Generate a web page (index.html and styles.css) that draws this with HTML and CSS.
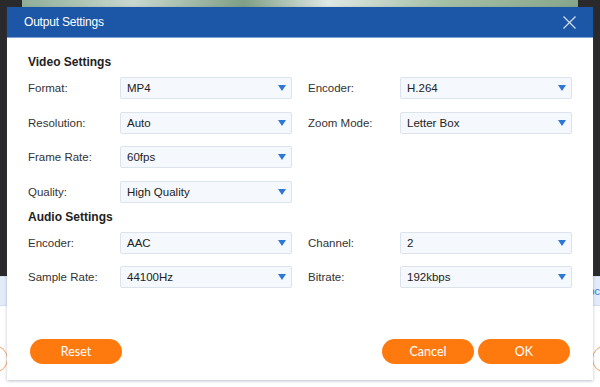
FILE: index.html
```html
<!DOCTYPE html>
<html>
<head>
<meta charset="utf-8">
<link rel="stylesheet" href="styles.css">
</head>
<body>
<div class="app">
  <div class="app-top">
    <div class="photo"></div>
  </div>
  <div class="app-band"><span class="band-text">oc</span></div>
  <div class="app-bottom">
    <span class="ring ring-left"></span>
    <span class="ring ring-right"></span>
  </div>
</div>

<div class="dialog">
  <div class="dialog-header">
    <span class="dialog-title">Output Settings</span>
    <svg class="close" width="13" height="13" viewBox="0 0 13 13"><path d="M0.5 0.5 L12.5 12.5 M12.5 0.5 L0.5 12.5" stroke="#cfdcef" stroke-width="1.3" fill="none"/></svg>
  </div>
  <div class="dialog-body">
    <div class="section-title">Video Settings</div>
    <div class="grid">
      <div class="label">Format:</div>
      <div class="select"><span>MP4</span><i class="arrow"></i></div>
      <div class="label">Encoder:</div>
      <div class="select"><span>H.264</span><i class="arrow"></i></div>

      <div class="label">Resolution:</div>
      <div class="select"><span>Auto</span><i class="arrow"></i></div>
      <div class="label">Zoom Mode:</div>
      <div class="select"><span>Letter Box</span><i class="arrow"></i></div>

      <div class="label">Frame Rate:</div>
      <div class="select"><span>60fps</span><i class="arrow"></i></div>
      <div class="empty"></div>
      <div class="empty"></div>

      <div class="label">Quality:</div>
      <div class="select"><span>High Quality</span><i class="arrow"></i></div>
      <div class="empty"></div>
      <div class="empty"></div>
    </div>

    <div class="section-title audio">Audio Settings</div>
    <div class="grid">
      <div class="label">Encoder:</div>
      <div class="select"><span>AAC</span><i class="arrow"></i></div>
      <div class="label">Channel:</div>
      <div class="select"><span>2</span><i class="arrow"></i></div>

      <div class="label">Sample Rate:</div>
      <div class="select"><span>44100Hz</span><i class="arrow"></i></div>
      <div class="label">Bitrate:</div>
      <div class="select"><span>192kbps</span><i class="arrow"></i></div>
    </div>
  </div>
  <div class="dialog-footer">
    <button class="btn">Reset</button>
    <div class="footer-right">
      <button class="btn">Cancel</button>
      <button class="btn">OK</button>
    </div>
  </div>
</div>
</body>
</html>
```

FILE: styles.css
```css
* { box-sizing: border-box; }
html, body { margin: 0; padding: 0; }
body {
  width: 600px;
  height: 387px;
  overflow: hidden;
  position: relative;
  background: #ffffff;
  font-family: "Liberation Sans", Arial, sans-serif;
}

/* backdrop application */
.app {
  display: flex;
  flex-direction: column;
  height: 387px;
}
.app-top {
  height: 276px;
  background: #2a2a2c;
  padding: 0 22px;
}
.photo {
  height: 8px;
  width: 556px;
  background: linear-gradient(90deg, #8fae98 0%, #c9d8cf 20%, #7f9f86 40%, #dfe8e4 55%, #a7c0a8 75%, #86a68b 100%);
}
.app-band {
  height: 30px;
  background: #e2ebf8;
  border-top: 1px solid #d2dff2;
  border-bottom: 1px solid #d2dff2;
  display: flex;
  justify-content: flex-end;
  align-items: center;
  overflow: hidden;
}
.band-text {
  color: #3d7bd2;
  font-size: 11px;
  margin-right: 0;
}
.app-bottom {
  flex: 1;
  position: relative;
  background: #ffffff;
}
.ring {
  position: absolute;
  width: 28px;
  height: 28px;
  border: 1.5px solid #f2a466;
  border-radius: 50%;
  top: 39px;
}
.ring-left { left: -20px; }
.ring-right { right: -20px; }

/* dialog */
.dialog {
  position: absolute;
  left: 7px;
  top: 7px;
  width: 586px;
  height: 373px;
  background: #ffffff;
  box-shadow: 0 1px 3px rgba(60, 80, 110, 0.35);
  display: flex;
  flex-direction: column;
}
.dialog-header {
  height: 31px;
  background: #1c56a6;
  border-bottom: 1px solid #7fa2d2;
  display: flex;
  align-items: center;
  justify-content: space-between;
  padding: 0 17px 0 17px;
}
.dialog-title {
  color: #ffffff;
  font-size: 12px;
  letter-spacing: -0.2px;
}
.close { display: block; }

.dialog-body {
  padding: 16px 21px 0 21px;
}
.section-title {
  font-weight: bold;
  font-size: 12px;
  line-height: 16px;
  color: #222222;
  margin-bottom: 7px;
}
.section-title.audio {
  margin-top: 6px;
}
.grid {
  display: grid;
  grid-template-columns: 92px 172px 108px 172px;
  grid-auto-rows: 22px;
  row-gap: 12.6px;
}
.grid > :nth-child(4n+3) { padding-left: 16px; }
.label {
  font-size: 11.5px;
  color: #333333;
  display: flex;
  align-items: center;
}
.select {
  background: #f5f8fc;
  border: 1px solid #dbe3ed;
  border-radius: 2px;
  display: flex;
  align-items: center;
  justify-content: space-between;
  padding: 0 5px 0 6px;
  font-size: 11.5px;
  color: #222222;
}
.arrow {
  width: 0;
  height: 0;
  border-left: 4.5px solid transparent;
  border-right: 4.5px solid transparent;
  border-top: 6px solid #2d78d6;
}

.dialog-footer {
  margin-top: auto;
  padding: 0 23px 16px 23px;
  display: flex;
  justify-content: space-between;
  align-items: flex-end;
}
.footer-right {
  display: flex;
  gap: 4px;
}
.btn {
  width: 92px;
  height: 25px;
  border: none;
  border-radius: 13px;
  background: #ff7a0e;
  color: #ffffff;
  font-family: Lato, "Liberation Sans", sans-serif;
  font-size: 12.5px;
  padding: 0;
}
```
